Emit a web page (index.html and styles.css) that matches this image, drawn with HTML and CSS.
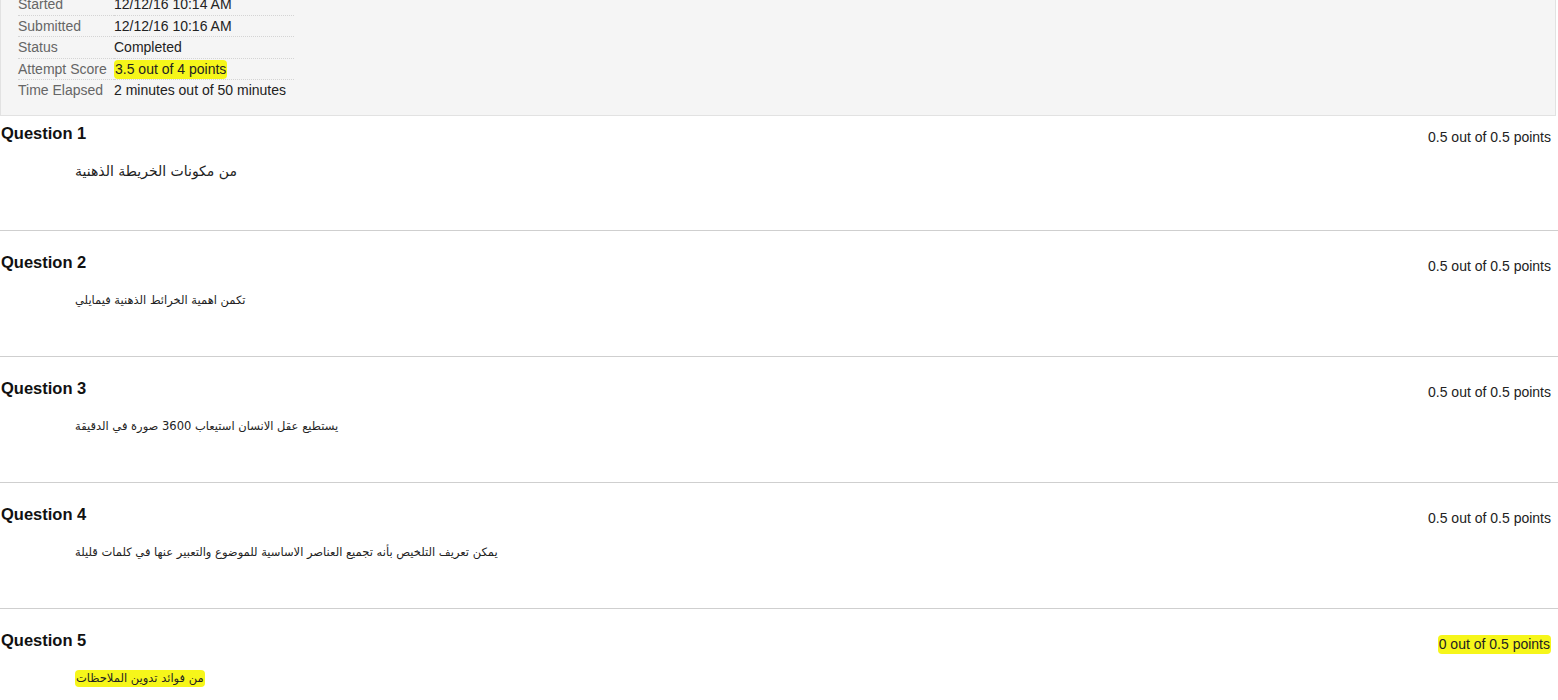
FILE: index.html
```html
<!DOCTYPE html>
<html lang="en">
<head>
    <meta charset="UTF-8">
    <meta name="viewport" content="width=device-width, initial-scale=1.0">
    <title>Review Test Submission</title>
    <link rel="stylesheet" href="styles.css">
</head>
<body>
    <div class="attempt-panel">
        <table class="attempt-info">
            <tr><th>Started</th><td>12/12/16 10:14 AM</td></tr>
            <tr><th>Submitted</th><td>12/12/16 10:16 AM</td></tr>
            <tr><th>Status</th><td>Completed</td></tr>
            <tr><th>Attempt Score</th><td><span class="mark">3.5 out of 4 points</span></td></tr>
            <tr><th>Time Elapsed</th><td>2 minutes out of 50 minutes</td></tr>
        </table>
    </div>

    <div class="question first">
        <div class="question-head">
            <h3>Question 1</h3>
            <div class="points">0.5 out of 0.5 points</div>
        </div>
        <div class="question-text big">من مكونات الخريطة الذهنية</div>
    </div>

    <div class="question">
        <div class="question-head">
            <h3>Question 2</h3>
            <div class="points">0.5 out of 0.5 points</div>
        </div>
        <div class="question-text">تكمن اهمية الخرائط الذهنية فيمايلي</div>
    </div>

    <div class="question">
        <div class="question-head">
            <h3>Question 3</h3>
            <div class="points">0.5 out of 0.5 points</div>
        </div>
        <div class="question-text">يستطيع عقل الانسان استيعاب 3600 صورة في الدقيقة</div>
    </div>

    <div class="question">
        <div class="question-head">
            <h3>Question 4</h3>
            <div class="points">0.5 out of 0.5 points</div>
        </div>
        <div class="question-text">يمكن تعريف التلخيص بأنه تجميع العناصر الاساسية للموضوع والتعبير عنها في كلمات قليلة</div>
    </div>

    <div class="question last">
        <div class="question-head">
            <h3>Question 5</h3>
            <div class="points"><span class="mark">0 out of 0.5 points</span></div>
        </div>
        <div class="question-text"><span class="mark">من فوائد تدوين الملاحظات</span></div>
    </div>
</body>
</html>
```

FILE: styles.css
```css
body {
    margin: 0;
    font-family: "Liberation Sans", Arial, "DejaVu Sans", sans-serif;
    font-size: 14px;
    color: #333;
    background: #fff;
    overflow: hidden;
}

/* attempt summary */
.attempt-panel {
    margin: -14px 2px 0 0;
    padding: 8px 0 14px 17px;
    background-color: #f5f5f5;
    border-left: 1px solid #e2e2e2;
    border-right: 1px solid #e2e2e2;
    border-bottom: 1px solid #e2e2e2;
}
.attempt-info {
    border-collapse: collapse;
    width: 276px;
}
.attempt-info th,
.attempt-info td {
    padding: 0;
    line-height: 20.6px;
    font-weight: normal;
    text-align: left;
    white-space: nowrap;
    vertical-align: middle;
}
.attempt-info th {
    width: 96px;
    color: #666;
}
.attempt-info td {
    color: #222;
}
.attempt-info tr {
    border-bottom: 1px dotted #d4d4d4;
}
.attempt-info tr:last-child {
    border-bottom: none;
}

.mark {
    background-color: #f6f61a;
    border-radius: 4px;
    padding: 1px 1px 2px;
}

/* questions */
.question {
    padding: 21px 7px 46px 1px;
    border-bottom: 1px solid #cfcfcf;
}
.question.first {
    padding-top: 7px;
    padding-bottom: 49px;
}
.question.last {
    border-bottom: none;
}
.question-head {
    display: flex;
    justify-content: space-between;
    align-items: flex-start;
    height: 20px;
}
.question-head h3 {
    margin: 0;
    font-size: 16.5px;
    line-height: 20px;
    font-weight: bold;
    color: #111;
}
.points {
    margin-top: 4px;
    line-height: 20px;
    color: #222;
}
.question-text {
    height: 20px;
    margin: 18px 0 0 74px;
    font-family: "DejaVu Sans", sans-serif;
    font-size: 11.5px;
    line-height: 20px;
    color: #222;
}
.question-text.big {
    font-size: 14px;
}
```
